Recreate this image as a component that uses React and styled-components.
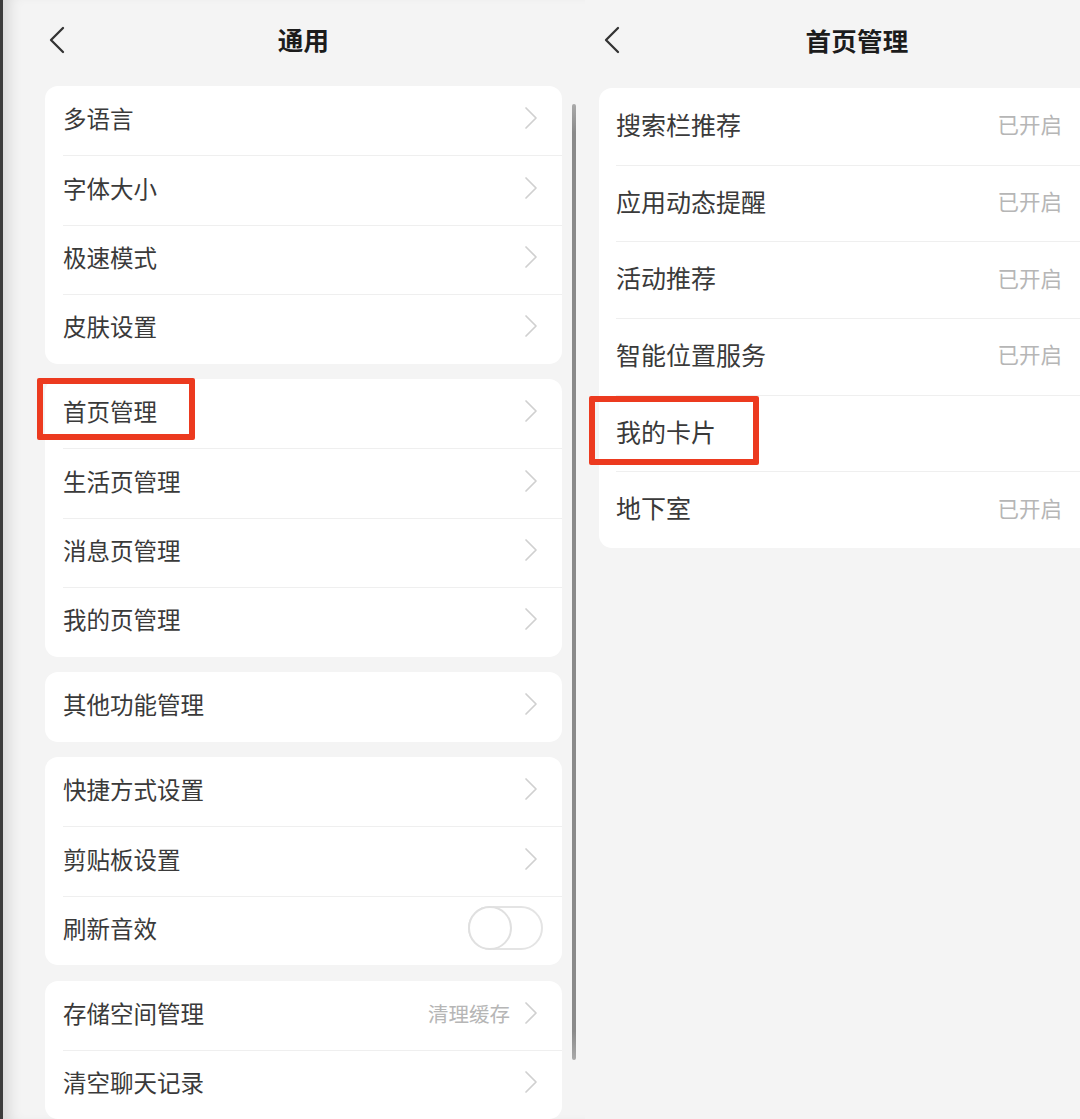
import styled, { createGlobalStyle } from 'styled-components';

const GlobalStyle = createGlobalStyle`
	html, body {
		margin: 0;
		padding: 0;
		background: #f4f4f4;
	}
	body {
		font-family: 'Noto Sans CJK SC', 'Noto Sans', sans-serif;
		color: #333;
	}
`

const Screen = styled.div`
	display: grid;
	grid-template-columns: 585px 1fr;
	width: 1080px;
	height: 1119px;
	overflow: hidden;
	background: #f4f4f4;
`

const Panel = styled.div`
	position: relative;
	display: flex;
	flex-direction: column;
	overflow: hidden;
	background: #f4f4f4;
	${ props => props.edge && `
		border-left: 3px solid #3c3c3c;
		box-shadow: inset 14px 0 14px -8px rgba(0, 0, 0, 0.12);
	` }
`

const Header = styled.div`
	position: relative;
	display: flex;
	align-items: center;
	justify-content: center;
	flex-shrink: 0;
	width: ${ props => props.width }px;
	height: ${ props => props.height }px;
`

const Back = styled.svg`
	position: absolute;
	left: ${ props => props.left }px;
	top: 26px;
	width: 17px;
	height: 28px;
`

const Title = styled.h1`
	margin: 0;
	margin-top: ${ props => props.shift }px;
	font-size: 25.5px;
	font-weight: 700;
	color: #1c1c1c;
	letter-spacing: 0.3px;
`

const CardList = styled.div`
	display: flex;
	flex-direction: column;
	gap: 15.5px;
	width: ${ props => props.width }px;
	margin-left: ${ props => props.left }px;
`

const Card = styled.div`
	background: #fff;
	border-radius: 13px;
`

const Row = styled.div`
	position: relative;
	display: flex;
	align-items: center;
	box-sizing: border-box;
	height: ${ props => props.h }px;
	padding-left: ${ props => props.pad }px;
	padding-right: ${ props => props.padRight }px;
	padding-bottom: 5px;

	& + & {
		&::before {
			content: '';
			position: absolute;
			top: 0;
			left: ${ props => props.pad }px;
			right: 0;
			height: 1px;
			background: #efefef;
		}
	}
`

const Label = styled.span`
	flex: 1;
	font-size: ${ props => props.size }px;
	color: #3a3a3a;
	white-space: nowrap;
`

const Value = styled.span`
	font-size: ${ props => props.size }px;
	color: #b6b6b6;
	margin-right: ${ props => props.gap || 0 }px;
	white-space: nowrap;
`

const Chevron = styled.svg`
	width: 14px;
	height: 24px;
	flex-shrink: 0;
`

const Toggle = styled.div`
	position: relative;
	width: 75px;
	height: 44px;
	box-sizing: border-box;
	border: 2px solid #e4e4e4;
	border-radius: 22px;
	margin-right: -5px;
	background: #fff;

	&::after {
		content: '';
		position: absolute;
		top: -2px;
		left: -2px;
		width: 44px;
		height: 44px;
		box-sizing: border-box;
		border: 2px solid #e0e0e0;
		border-radius: 50%;
		background: #fff;
	}
`

const Highlight = styled.div`
	position: absolute;
	left: ${ props => props.x }px;
	top: ${ props => props.y }px;
	width: ${ props => props.w }px;
	height: ${ props => props.h }px;
	box-sizing: border-box;
	border: 6px solid #ec3a1f;
	border-radius: 2px;
	pointer-events: none;
`

const Scrollbar = styled.div`
	position: absolute;
	left: 569px;
	top: 104px;
	width: 4px;
	height: 956px;
	border-radius: 2px;
	background: linear-gradient(to bottom, #aaa 0%, #8a8a8a 3%, #8a8a8a 97%, #aaa 100%);
`

const BackIcon = ({ left }) => (
	<Back left={left} viewBox="0 0 17 28">
		<path d="M15 2 L3 14 L15 26" fill="none" stroke="#333" strokeWidth="2.3" strokeLinecap="round" strokeLinejoin="round" />
	</Back>
)

const ChevronIcon = () => (
	<Chevron viewBox="0 0 14 24">
		<path d="M2 2 L12 12 L2 22" fill="none" stroke="#d0d0d0" strokeWidth="1.7" strokeLinecap="round" strokeLinejoin="round" />
	</Chevron>
)

const generalGroups = [
	['多语言', '字体大小', '极速模式', '皮肤设置'],
	['首页管理', '生活页管理', '消息页管理', '我的页管理'],
	['其他功能管理'],
	['快捷方式设置', '剪贴板设置', { label: '刷新音效', toggle: true }],
	[{ label: '存储空间管理', value: '清理缓存' }, '清空聊天记录'],
]

const homeItems = [
	{ label: '搜索栏推荐', value: '已开启' },
	{ label: '应用动态提醒', value: '已开启' },
	{ label: '活动推荐', value: '已开启' },
	{ label: '智能位置服务', value: '已开启' },
	{ label: '我的卡片' },
	{ label: '地下室', value: '已开启' },
]

const App = () => {
	return (
		<>
			<GlobalStyle />
			<Screen>
				<Panel edge>
					<Header width={601} height={86}>
						<BackIcon left={45} />
						<Title shift={-10}>通用</Title>
					</Header>
					<CardList width={517} left={42}>
						{generalGroups.map((group, gi) => (
							<Card key={gi}>
								{group.map((item) => {
									const it = typeof item === 'string' ? { label: item } : item
									return (
										<Row key={it.label} h={69.4} pad={18} padRight={24}>
											<Label size={23.5}>{it.label}</Label>
											{it.toggle ? (
												<Toggle />
											) : (
												<>
													{it.value && <Value size={20.5} gap={14}>{it.value}</Value>}
													<ChevronIcon />
												</>
											)}
											{it.label === '首页管理' && <Highlight x={-8} y={-1} w={158} h={62} />}
										</Row>
									)
								})}
							</Card>
						))}
					</CardList>
					<Scrollbar />
				</Panel>
				<Panel>
					<Header width={544} height={88}>
						<BackIcon left={18} />
						<Title shift={-10}>首页管理</Title>
					</Header>
					<CardList width={501} left={14}>
						<Card>
							{homeItems.map((it) => (
								<Row key={it.label} h={76.7} pad={17} padRight={38}>
									<Label size={25}>{it.label}</Label>
									{it.value && <Value size={21.5}>{it.value}</Value>}
									{it.label === '我的卡片' && <Highlight x={-10} y={1} w={170} h={69} />}
								</Row>
							))}
						</Card>
					</CardList>
				</Panel>
			</Screen>
		</>
	)
}

export default App
